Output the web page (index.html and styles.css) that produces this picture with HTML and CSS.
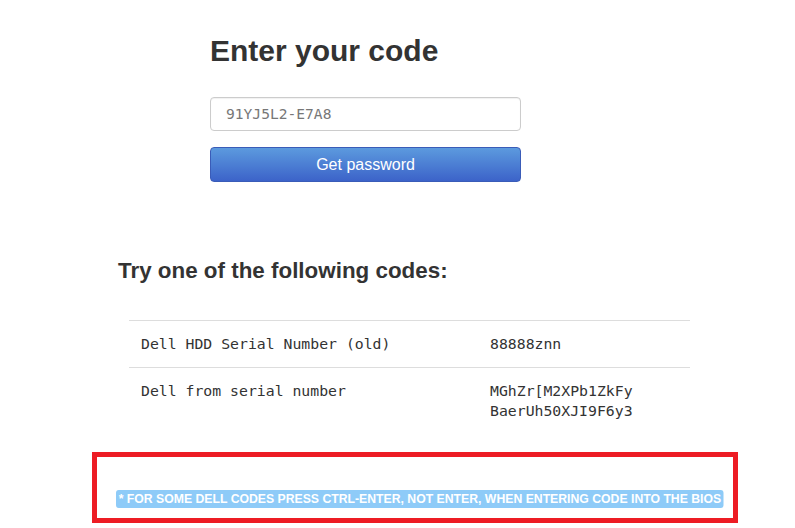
FILE: index.html
```html
<!DOCTYPE html>
<html>
<head>
<meta charset="utf-8">
<link rel="stylesheet" href="styles.css">
</head>
<body>
<main class="page">
  <section class="form">
    <h1 class="title">Enter your code</h1>
    <div class="input">91YJ5L2-E7A8</div>
    <button class="btn">Get password</button>
  </section>
  <section class="results">
    <h2 class="subtitle">Try one of the following codes:</h2>
    <div class="table">
      <div class="row">
        <div class="cell name">Dell HDD Serial Number (old)</div>
        <div class="cell code">88888znn</div>
      </div>
      <div class="row">
        <div class="cell name">Dell from serial number</div>
        <div class="cell code">MGhZr[M2XPb1ZkFy<br>BaerUh50XJI9F6y3</div>
      </div>
    </div>
    <div class="notice">
      <span class="label">* FOR SOME DELL CODES PRESS CTRL-ENTER, NOT ENTER, WHEN ENTERING CODE INTO THE BIOS</span>
    </div>
  </section>
</main>
</body>
</html>
```
FILE: styles.css
```css
* { box-sizing: border-box; }
html, body { margin: 0; padding: 0; background: #fff; }
body {
  font-family: "Liberation Sans", Arial, sans-serif;
  color: #333;
  width: 795px;
  height: 528px;
  overflow: hidden;
}
.page { display: flex; flex-direction: column; }
.form {
  margin-left: 210px;
  width: 311px;
  display: flex;
  flex-direction: column;
}
.title {
  margin: 34px 0 0;
  font-size: 30px;
  line-height: 33px;
  font-weight: bold;
  color: #333;
}
.input {
  margin-top: 30px;
  height: 34px;
  border: 1px solid #ccc;
  border-radius: 4px;
  padding: 0 15px;
  font-family: "DejaVu Sans Mono", monospace;
  font-size: 14.6px;
  line-height: 32px;
  color: #777;
  box-shadow: inset 0 1px 1px rgba(0,0,0,0.06);
}
.btn {
  margin-top: 16px;
  height: 35px;
  border: 1px solid #3a5cb8;
  border-radius: 4px;
  background: linear-gradient(#5c9ade, #3c63c9);
  color: #fff;
  font-family: "Liberation Sans", Arial, sans-serif;
  font-size: 16px;
  padding: 0;
}
.results {
  display: flex;
  flex-direction: column;
}
.subtitle {
  margin: 77px 0 0 118px;
  font-size: 22.4px;
  line-height: 24px;
  font-weight: bold;
  color: #333;
}
.table {
  margin: 37px 0 0 129px;
  width: 561px;
  font-family: "DejaVu Sans Mono", monospace;
  font-size: 14.8px;
  line-height: 20px;
  color: #333;
}
.row {
  display: grid;
  grid-template-columns: 349px 1fr;
  border-top: 1px solid #ddd;
}
.cell { padding: 13px 12px; }
.notice {
  margin: 18px 0 0 92px;
  width: 646px;
  height: 71px;
  border: 5px solid #ed1c24;
  padding: 32px 0 0 19px;
}
.label {
  display: inline-block;
  height: 18px;
  background: #8ecbf8;
  color: #fff;
  border-radius: 3px;
  padding: 0 3px;
  font-family: "Liberation Sans", Arial, sans-serif;
  font-weight: bold;
  font-size: 13.6px;
  line-height: 18px;
  white-space: nowrap;
  transform: scaleX(0.9);
  transform-origin: left center;
}
```
